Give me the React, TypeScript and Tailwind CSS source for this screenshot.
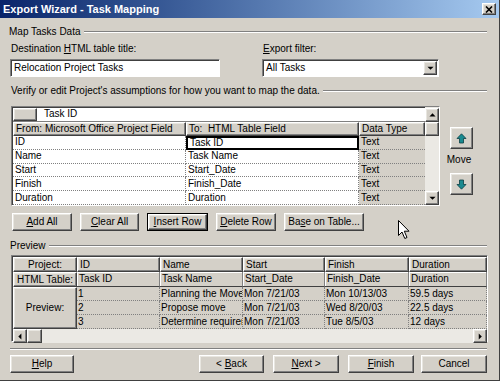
// Export Wizard - Task Mapping dialog (Windows classic look)

const raised =
  'border border-t-white border-l-white border-r-[#404040] border-b-[#404040] shadow-[inset_-1px_-1px_0_#808080,inset_1px_1px_0_#e8e6e0] bg-[#d4d0c8]';
const sunken =
  'border border-t-[#808080] border-l-[#808080] border-r-white border-b-white shadow-[inset_1px_1px_0_#404040]';

function Etched({ className = '' }: { className?: string }) {
  return <div className={`h-[2px] border-t border-t-[#808080] border-b border-b-white ${className}`} />;
}

function GroupHeader({ label, className = '' }: { label: string; className?: string }) {
  return (
    <div className={`flex items-center h-[12px] ${className}`}>
      <span className="whitespace-nowrap pr-[3px]">{label}</span>
      <Etched className="flex-1" />
    </div>
  );
}

function Tri({ dir }: { dir: 'up' | 'down' | 'left' | 'right' }) {
  const pts = {
    up: '0.5,5 4,1.5 7.5,5',
    down: '0.5,2 4,5.5 7.5,2',
    left: '5,0.5 1.5,4 5,7.5',
    right: '2,0.5 5.5,4 2,7.5',
  }[dir];
  return (
    <svg width="7" height="7" viewBox="0 0 8 8">
      <polygon points={pts} fill="#000" />
    </svg>
  );
}

function ScrollBtn({ dir }: { dir: 'up' | 'down' | 'left' | 'right' }) {
  return (
    <div className={`${raised} w-[14px] h-[14px] flex items-center justify-center shrink-0`}>
      <Tri dir={dir} />
    </div>
  );
}

function Btn({
  children,
  className = '',
  isDefault = false,
}: {
  children: React.ReactNode;
  className?: string;
  isDefault?: boolean;
}) {
  return (
    <div className={`${isDefault ? 'border border-black' : ''} h-[18px] shrink-0 ${className}`}>
      <div className={`${raised} h-full w-full flex items-center justify-center whitespace-pre`}>{children}</div>
    </div>
  );
}

function MoveArrow({ up }: { up: boolean }) {
  return (
    <svg width="11" height="11" viewBox="0 0 11 11">
      <path
        d={up ? 'M5.5 0.8 L10 5.5 H7.5 V10 H3.5 V5.5 H1 Z' : 'M5.5 10.2 L10 5.5 H7.5 V1 H3.5 V5.5 H1 Z'}
        fill="#1a8a90"
        stroke="#0b3f44"
        strokeWidth="0.8"
      />
    </svg>
  );
}

const mapRows = [
  ['ID', 'Task ID'],
  ['Name', 'Task Name'],
  ['Start', 'Start_Date'],
  ['Finish', 'Finish_Date'],
  ['Duration', 'Duration'],
];

const previewRows = [
  ['1', 'Planning the Move', 'Mon 7/21/03', 'Mon 10/13/03', '59.5 days'],
  ['2', 'Propose move', 'Mon 7/21/03', 'Wed 8/20/03', '22.5 days'],
  ['3', 'Determine requirem', 'Mon 7/21/03', 'Tue 8/5/03', '12 days'],
];

export default function App() {
  return (
    <div className="relative w-[500px] h-[381px] overflow-hidden bg-[#d4d0c8] text-black text-[10px] leading-[12px] font-['Liberation_Sans',Arial,sans-serif] border-r border-b border-r-[#404040] border-b-[#404040]">
      {/* Title bar */}
      <div className="h-[18px] flex items-center pl-[3px] pr-[3px] bg-gradient-to-r from-[#0a246a] to-[#a6caf0]">
        <span className="text-white font-bold text-[11px] flex-1">Export Wizard - Task Mapping</span>
        <div className={`${raised} w-[14px] h-[12px] flex items-center justify-center`}>
          <svg width="8" height="7" viewBox="0 0 8 7">
            <path d="M1 0.5 L7 6.5 M7 0.5 L1 6.5" stroke="#000" strokeWidth="1.6" />
          </svg>
        </div>
      </div>

      <div className="pl-[10px] pr-[12px]">
        <GroupHeader label="Map Tasks Data" className="mt-[8px] -ml-px" />

        <div className="flex mt-[5px]">
          <div className="w-[210px]">
            <div className="h-[12px] pl-px">
              Destination <span className="underline">H</span>TML table title:
            </div>
            <div className={`${sunken} bg-white h-[18px] mt-[4px] flex items-center pl-[3px]`}>
              Relocation Project Tasks
            </div>
          </div>
          <div className="w-[177px] ml-[42px]">
            <div className="h-[12px] pl-px">
              <span className="underline">E</span>xport filter:
            </div>
            <div className={`${sunken} bg-white h-[18px] mt-[4px] flex items-center pl-[3px] pr-px`}>
              <span className="flex-1">All Tasks</span>
              <ScrollBtn dir="down" />
            </div>
          </div>
        </div>

        <GroupHeader
          label="Verify or edit Project's assumptions for how you want to map the data."
          className="mt-[8px] pl-px"
        />

        {/* Mapping grid + move buttons */}
        <div className="flex mt-[9px]">
          <div className={`${sunken} ml-px w-[429px] h-[100px] flex bg-white`}>
            <div className="flex-1 flex flex-col pt-px pl-px">
              <div className="h-[14px] flex border-b border-b-[#808080]">
                <div className={`${raised} w-[24px] h-full`} />
                <div className="pl-[7px] flex items-center">Task ID</div>
              </div>
              <div className="h-[14px] flex">
                <div className={`${raised} w-[173px] pl-[2px] flex items-center`}>From: Microsoft Office Project Field</div>
                <div className={`${raised} w-[173px] pl-[2px] flex items-center`}>To:&nbsp; HTML Table Field</div>
                <div className={`${raised} flex-1 pl-[2px] flex items-center`}>Data Type</div>
              </div>
              {mapRows.map(([from, to], i) => (
                <div key={from} className="h-[14px] flex">
                  <div className="w-[173px] pl-[2px] flex items-center border-b border-dotted border-b-[#808080] border-r border-r-[#808080]">
                    {from}
                  </div>
                  <div
                    className={`w-[173px] pl-[2px] flex items-center ${
                      i === 0
                        ? 'border-2 border-black'
                        : 'border-b border-dotted border-b-[#808080] border-r border-r-[#808080]'
                    }`}
                  >
                    {to}
                  </div>
                  <div className="flex-1 pl-[2px] flex items-center bg-[#d4d0c8] border-b border-dotted border-b-[#808080]">
                    Text
                  </div>
                </div>
              ))}
            </div>
            <div className="w-[14px] flex flex-col bg-[#ebe9e4] pt-px">
              <ScrollBtn dir="up" />
              <div className={`${raised} w-[14px] h-[14px]`} />
              <div className="flex-1" />
              <ScrollBtn dir="down" />
            </div>
          </div>

          <div className="ml-[9px] w-[24px] flex flex-col items-center">
            <div className={`${raised} w-[23px] h-[22px] mt-[21px] flex items-center justify-center`}>
              <MoveArrow up />
            </div>
            <div className="mt-[5px] h-[12px] -ml-[4px] whitespace-nowrap">Move</div>
            <div className={`${raised} w-[23px] h-[22px] mt-[7px] flex items-center justify-center`}>
              <MoveArrow up={false} />
            </div>
          </div>
        </div>

        {/* Grid action buttons */}
        <div className="flex gap-[8px] mt-[7px] ml-[2px]">
          <Btn className="w-[60px]">
            <span className="underline">A</span>dd All
          </Btn>
          <Btn className="w-[59px]">
            <span className="underline">C</span>lear All
          </Btn>
          <Btn className="w-[61px]" isDefault>
            <span className="underline">I</span>nsert Row
          </Btn>
          <Btn className="w-[60px]">
            <span className="underline">D</span>elete Row
          </Btn>
          <Btn className="w-[80px]">
            Ba<span className="underline">s</span>e on Table...
          </Btn>
        </div>

        <GroupHeader label="Preview" className="mt-[9px]" />

        {/* Preview table */}
        <div className={`${sunken} ml-px mt-[3px] w-[477px] h-[87px] flex flex-col pt-px pl-px bg-[#d4d0c8]`}>
          <div className="grid grid-cols-[64px_83px_83px_82px_84px_1fr] grid-rows-[15px_15px_14px_14px_14px]">
            <div className={`${raised} flex items-center justify-center`}>Project:</div>
            {['ID', 'Name', 'Start', 'Finish', 'Duration'].map((h) => (
              <div key={h} className={`${raised} flex items-center pl-[2px]`}>
                {h}
              </div>
            ))}
            <div className={`${raised} flex items-center justify-center`}>HTML Table:</div>
            {['Task ID', 'Task Name', 'Start_Date', 'Finish_Date', 'Duration'].map((h) => (
              <div key={h} className="flex items-center pl-[2px] border-b border-b-[#404040] border-r border-r-[#808080] shadow-[inset_1px_1px_0_#ffffff]">
                {h}
              </div>
            ))}
            <div className={`${raised} row-span-3 flex items-center justify-center`}>Preview:</div>
            {previewRows.map((r) =>
              r.map((c, j) => (
                <div
                  key={r[0] + j}
                  className="flex items-center pl-px overflow-hidden whitespace-nowrap border-b border-r border-dotted border-[#808080]"
                >
                  {c}
                </div>
              ))
            )}
          </div>
          <div className="flex-1 flex items-end">
            <div className="flex w-full h-[14px] bg-[#ebe9e4]">
              <ScrollBtn dir="left" />
              <div className={`${raised} w-[15px] h-[14px]`} />
              <div className="flex-1" />
              <ScrollBtn dir="right" />
            </div>
          </div>
        </div>

        <Etched className="mt-[6px]" />

        {/* Wizard buttons */}
        <div className="flex mt-[5px]">
          <Btn className="w-[64px]">
            <span className="underline">H</span>elp
          </Btn>
          <div className="flex-1" />
          <Btn className="w-[65px]">
            {'< '}
            <span className="underline">B</span>ack
          </Btn>
          <Btn className="w-[66px] ml-[9px]">
            <span className="underline">N</span>
            {'ext >'}
          </Btn>
          <Btn className="w-[66px] ml-[9px]">
            <span className="underline">F</span>inish
          </Btn>
          <Btn className="w-[66px] ml-[7px]">Cancel</Btn>
        </div>
      </div>

      {/* Mouse pointer */}
      <svg className="absolute left-[398px] top-[220px]" width="13" height="20" viewBox="0 0 13 20">
        <path d="M0.5 0.5 L0.5 15.5 L4 12 L6.8 18.5 L9 17.5 L6.3 11.2 L11 11.2 Z" fill="#fff" stroke="#000" strokeWidth="1" />
      </svg>
    </div>
  );
}
